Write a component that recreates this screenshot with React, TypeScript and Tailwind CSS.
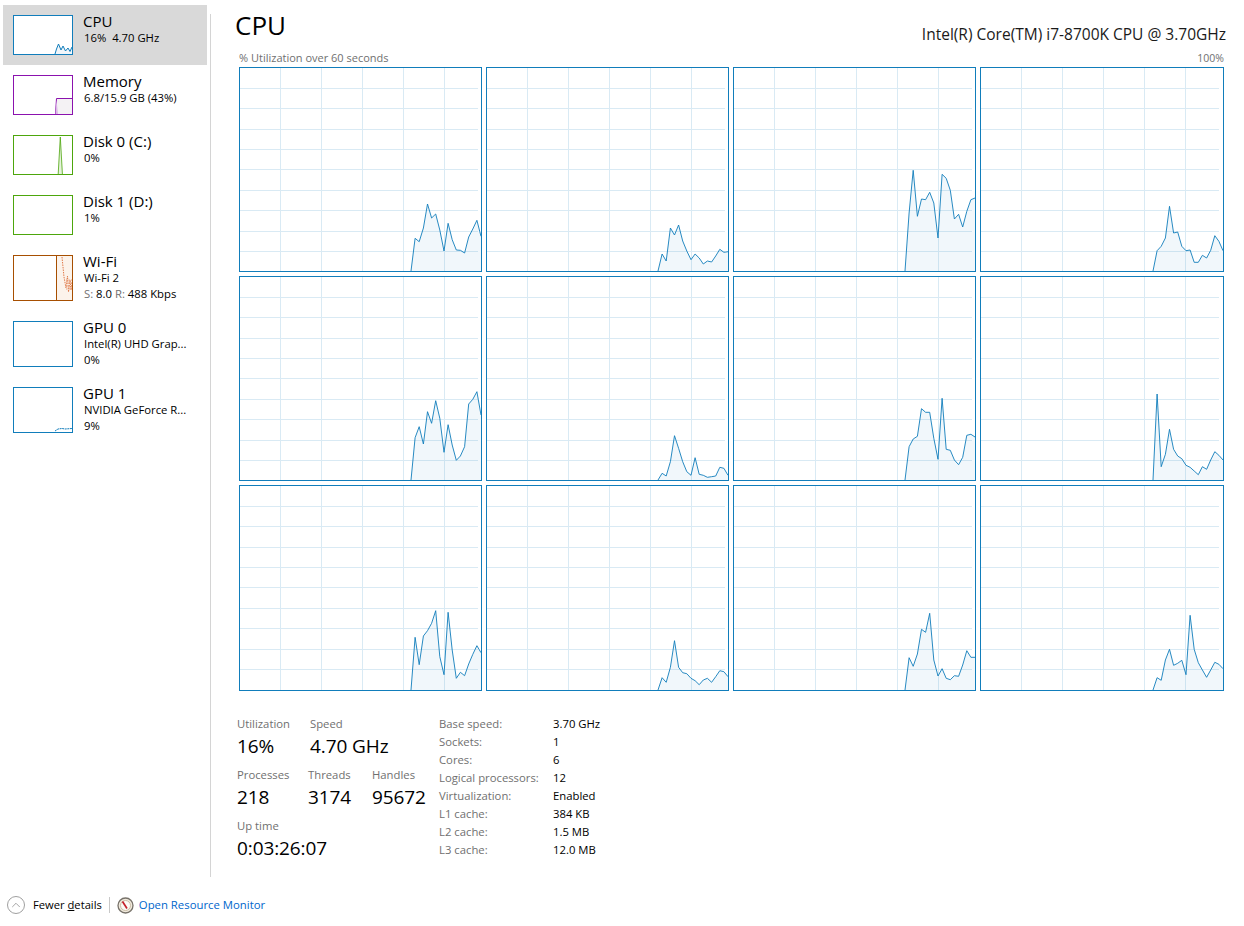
import { ChevronUp } from 'lucide-react';

const fontStack = "font-['Open_Sans','Noto_Sans',sans-serif]";

type CoreChart = { start: number; heights: number[] };

const cores: CoreChart[] = [
  { start: 171, heights: [0, 32.7, 29.3, 43, 67, 53, 57, 41, 20, 47.7, 31.3, 21, 20.7, 18, 34, 42, 50.7, 34.7] },
  { start: 171, heights: [0, 17, 10, 43, 36, 46, 30, 20, 11.3, 17, 13, 7, 10, 9, 15, 21.7, 18.7, 19.3] },
  { start: 171, heights: [0, 58, 100.7, 54.7, 72, 71.3, 78.7, 68, 33, 96.7, 92.7, 80.7, 52, 56.7, 44, 59.7, 71.3, 73] },
  { start: 172, heights: [0, 20.3, 24.7, 33, 64.7, 38, 39, 24.7, 20.3, 21, 8.7, 8.7, 15.7, 13, 20.7, 35.3, 29.7, 20.3] },
  { start: 171, heights: [0, 42.3, 53.3, 36, 68.3, 56.7, 79.3, 61.7, 27.7, 55.3, 35, 19.7, 24, 33.3, 76, 80.7, 88.3, 65] },
  { start: 171, heights: [0, 6.7, 4, 18.3, 44.3, 31.7, 18.3, 8.3, 4.7, 22.3, 5.7, 4.7, 2.7, 3.3, 4, 12.7, 11.7, 4.7] },
  { start: 171, heights: [0, 33.3, 41, 43.7, 71.3, 67.7, 67.7, 41.7, 20.7, 81.7, 30.7, 29.7, 20, 15.3, 22.7, 44.7, 45.7, 43] },
  { start: 172, heights: [0, 86, 13.3, 25.7, 50.7, 30.7, 24, 21.3, 14.7, 12.7, 9, 5.3, 13.3, 10.7, 20, 28.3, 24.7, 20] },
  { start: 171, heights: [0, 52.7, 25.3, 54, 59.3, 66.7, 79.3, 33.3, 15.3, 77.7, 40, 11.7, 17.7, 14.3, 26, 35.7, 44.3, 37.3] },
  { start: 171, heights: [0, 12.3, 7.7, 22.7, 49.3, 22.7, 17.3, 16.3, 11.7, 9.3, 5.3, 10, 11.7, 7.7, 13.3, 19.3, 18.3, 13.3] },
  { start: 171, heights: [0, 32.3, 23.7, 36, 60.7, 57.7, 76.7, 30, 14, 21.3, 11.7, 10.3, 14.3, 13.7, 25, 39.3, 32.7, 32.7] },
  { start: 172, heights: [0, 12.3, 9.7, 30, 40.7, 24.7, 26.7, 29.7, 15.3, 74.7, 40.7, 27.3, 20, 12.7, 20, 27.7, 25.7, 21.3] },
];

const vLines = [40.5, 81.5, 122.5, 163.5, 204.5];
const hLines = [20.5, 40.5, 61.5, 81.5, 101.5, 122.5, 142.5, 163.5, 183.5];

const CoreGraph = ({ chart, h }: { chart: CoreChart; h: number }) => {
  const pts = chart.heights.map((v, i) => `${(chart.start + i * 4.12).toFixed(1)},${(h - v).toFixed(1)}`).join(' ');
  const last = (chart.start + 17 * 4.12).toFixed(1);
  return (
    <div className="border border-[#117dbb] bg-white overflow-hidden">
      <svg className="block w-full h-full" fill="none">
        {vLines.map((x) => (
          <line key={x} x1={x} x2={x} y1={0} y2={h} stroke="#d9eaf4" />
        ))}
        {hLines.map((y) => (
          <line key={y} x1={0} x2={238} y1={y} y2={y} stroke="#d9eaf4" />
        ))}
        <polygon points={`${pts} ${last},${h}`} fill="#117dbb" fillOpacity={0.06} />
        <polyline points={pts} stroke="#117dbb" strokeWidth={1} strokeOpacity={0.9} />
      </svg>
    </div>
  );
};

const CpuThumb = () => (
  <svg className="block w-full h-full" fill="none">
    <polygon points="41,38 42.5,33 44.5,28 47,34 49,30 51.5,35 54,32 56,35.5 58,31 58,38" fill="#f1f6fa" />
    <polyline points="41,38 42.5,33 44.5,28 47,34 49,30 51.5,35 54,32 56,35.5 58,31" stroke="#117dbb" />
  </svg>
);

const MemoryThumb = () => (
  <svg className="block w-full h-full" fill="none">
    <rect x={42} y={23} width={16} height={15} fill="#f4f2f4" />
    <polyline points="41.5,38 42.5,22.5 58,22.5" stroke="#8b12ae" />
    <polygon points="41.5,38 42.5,24 44,38" fill="#dcb8e8" />
  </svg>
);

const DiskSpikeThumb = () => (
  <svg className="block w-full h-full" fill="none">
    <polygon points="44,38 46.3,1 48.6,38" fill="#e6f2dc" />
    <polyline points="44.2,38 46.3,1 48.4,38" stroke="#4da60c" strokeWidth={0.8} />
  </svg>
);

const WifiThumb = () => (
  <svg className="block w-full h-full" fill="none">
    <rect x={43} y={0} width={15} height={44} fill="#fcf3eb" />
    <line x1={42.5} x2={42.5} y1={0} y2={44} stroke="#a74f01" />
    <polyline points="48,1 50,21 52,32 53.5,20 54.5,36 56,24 57,34 58,26" stroke="#e07a4a" strokeDasharray="1.5 1" />
    <path d="M52 24H58M52 27H58M52 30H58M52 33H58" stroke="#e8a07c" strokeDasharray="1.4 1" />
  </svg>
);

const Gpu1Thumb = () => (
  <svg className="block w-full h-full" fill="none">
    <polyline points="41,43 44,41 48,40.5 51,41 58,40.5" stroke="#117dbb" strokeDasharray="2 0.6" />
  </svg>
);

type Device = {
  name: string;
  lines: React.ReactNode[];
  border: string;
  height: string;
  thumb?: React.ReactNode;
  selected?: boolean;
};

const devices: Device[] = [
  { name: 'CPU', lines: ['16%  4.70 GHz'], border: 'border-[#117dbb]', height: 'h-[40px]', thumb: <CpuThumb />, selected: true },
  { name: 'Memory', lines: ['6.8/15.9 GB (43%)'], border: 'border-[#8b12ae]', height: 'h-[40px]', thumb: <MemoryThumb /> },
  { name: 'Disk 0 (C:)', lines: ['0%'], border: 'border-[#4da60c]', height: 'h-[40px]', thumb: <DiskSpikeThumb /> },
  { name: 'Disk 1 (D:)', lines: ['1%'], border: 'border-[#4da60c]', height: 'h-[40px]' },
  {
    name: 'Wi-Fi',
    lines: [
      'Wi-Fi 2',
      <>
        <span className="text-[#707070]">S:</span> 8.0 <span className="text-[#707070]">R:</span> 488 Kbps
      </>,
    ],
    border: 'border-[#a74f01]',
    height: 'h-[46px]',
    thumb: <WifiThumb />,
  },
  { name: 'GPU 0', lines: ['Intel(R) UHD Grap...', '0%'], border: 'border-[#117dbb]', height: 'h-[46px]' },
  { name: 'GPU 1', lines: ['NVIDIA GeForce R...', '9%'], border: 'border-[#117dbb]', height: 'h-[46px]', thumb: <Gpu1Thumb /> },
];

const specs = [
  ['Base speed:', '3.70 GHz'],
  ['Sockets:', '1'],
  ['Cores:', '6'],
  ['Logical processors:', '12'],
  ['Virtualization:', 'Enabled'],
  ['L1 cache:', '384 KB'],
  ['L2 cache:', '1.5 MB'],
  ['L3 cache:', '12.0 MB'],
];

const Stat = ({ label, value, className }: { label: string; value: string; className: string }) => (
  <div className={className}>
    <div className="text-[11.3px] leading-[16px] text-[#707070]">{label}</div>
    <div className="text-[19px] leading-[26px] mt-[1px] text-black whitespace-nowrap tracking-[-0.1px]">{value}</div>
  </div>
);

const ResmonIcon = () => (
  <svg width="17" height="17" viewBox="0 0 17 17" fill="none">
    <circle cx="8.5" cy="8.5" r="7.5" fill="#f0e9dc" stroke="#77726a" strokeWidth="1.3" />
    <circle cx="8.5" cy="8.5" r="5" fill="#fbfaf6" stroke="#c9bda6" strokeWidth="1" />
    <path d="M5.5 4.5 L10 11.5" stroke="#c4202a" strokeWidth="1.7" />
  </svg>
);

const App = () => {
  return (
    <div className={`w-[1244px] h-[926px] bg-white overflow-hidden flex flex-col text-black ${fontStack}`}>
      <div className="flex h-[877px] shrink-0">
        <div className="w-[204px] ml-[3px] pt-[5px] shrink-0">
          {devices.map((d) => (
            <div key={d.name} className={`flex items-start pl-[10px] py-[10px] ${d.selected ? 'bg-[#d9d9d9]' : ''}`}>
              <div className={`w-[60px] ${d.height} border ${d.border} bg-white shrink-0 overflow-hidden`}>{d.thumb}</div>
              <div className="ml-[10px] -mt-[3px] -mb-[3px] whitespace-nowrap">
                <div className="text-[15px] leading-[18px]">{d.name}</div>
                {d.lines.map((line, i) => (
                  <div key={i} className="text-[11.3px] leading-[16px] ml-px whitespace-pre">
                    {line}
                  </div>
                ))}
              </div>
            </div>
          ))}
        </div>
        <div className="w-px mt-[14px] ml-[3px] bg-[#d4d4d4] shrink-0" />
        <div className="flex-1 pl-[24px] min-w-0">
          <div className="flex items-end justify-between w-[991px] h-[46px]">
            <div className="text-[26px] leading-[38px] mb-[2px]">CPU</div>
            <div className="text-[15.5px] leading-[20px] mb-[2px] text-[#1a1a1a]">Intel(R) Core(TM) i7-8700K CPU @ 3.70GHz</div>
          </div>
          <div className="flex justify-between w-[985px] ml-[4px] h-[21px] pt-[5px] text-[11px] leading-[14px] text-[#707070]">
            <span>% Utilization over 60 seconds</span>
            <span className="text-[10.5px]">100%</span>
          </div>
          <div className="ml-[4px] grid grid-cols-[243px_243px_243px_244px] grid-rows-[205px_205px_206px] gap-[4px]">
            {cores.map((c, i) => (
              <CoreGraph key={i} chart={c} h={i < 8 ? 203 : 204} />
            ))}
          </div>
          <div className="flex mt-[25px] ml-[2px]">
            <div className="w-[202px] shrink-0">
              <div className="flex">
                <Stat label="Utilization" value="16%" className="w-[73px]" />
                <Stat label="Speed" value="4.70 GHz" className="" />
              </div>
              <div className="flex mt-[8px]">
                <Stat label="Processes" value="218" className="w-[71px]" />
                <Stat label="Threads" value="3174" className="w-[64px]" />
                <Stat label="Handles" value="95672" className="" />
              </div>
              <div className="mt-[8px]">
                <Stat label="Up time" value="0:03:26:07" className="" />
              </div>
            </div>
            <div className="grid grid-cols-[114px_auto] auto-rows-[18px] text-[11.3px] leading-[18px] h-fit -mt-px">
              {specs.map(([label, value]) => (
                <div key={label} className="contents">
                  <div className="text-[#707070] whitespace-nowrap">{label}</div>
                  <div className="whitespace-nowrap">{value}</div>
                </div>
              ))}
            </div>
          </div>
        </div>
      </div>
      <div className="flex items-center h-[18px] mt-[19px] pl-[7px] text-[11.2px]">
        <div className="w-[18px] h-[18px] rounded-full border border-[#a0a0a0] flex items-center justify-center shrink-0">
          <ChevronUp size={14} strokeWidth={1.2} className="text-[#808080]" />
        </div>
        <span className="ml-[8px]">
          Fewer <span className="underline">d</span>etails
        </span>
        <div className="w-px h-[16px] bg-[#c8c8c8] ml-[7px]" />
        <div className="ml-[7px] shrink-0 flex">
          <ResmonIcon />
        </div>
        <span className="ml-[5px] text-[11.35px] text-[#0066cc]">Open Resource Monitor</span>
      </div>
    </div>
  );
};

export default App;
